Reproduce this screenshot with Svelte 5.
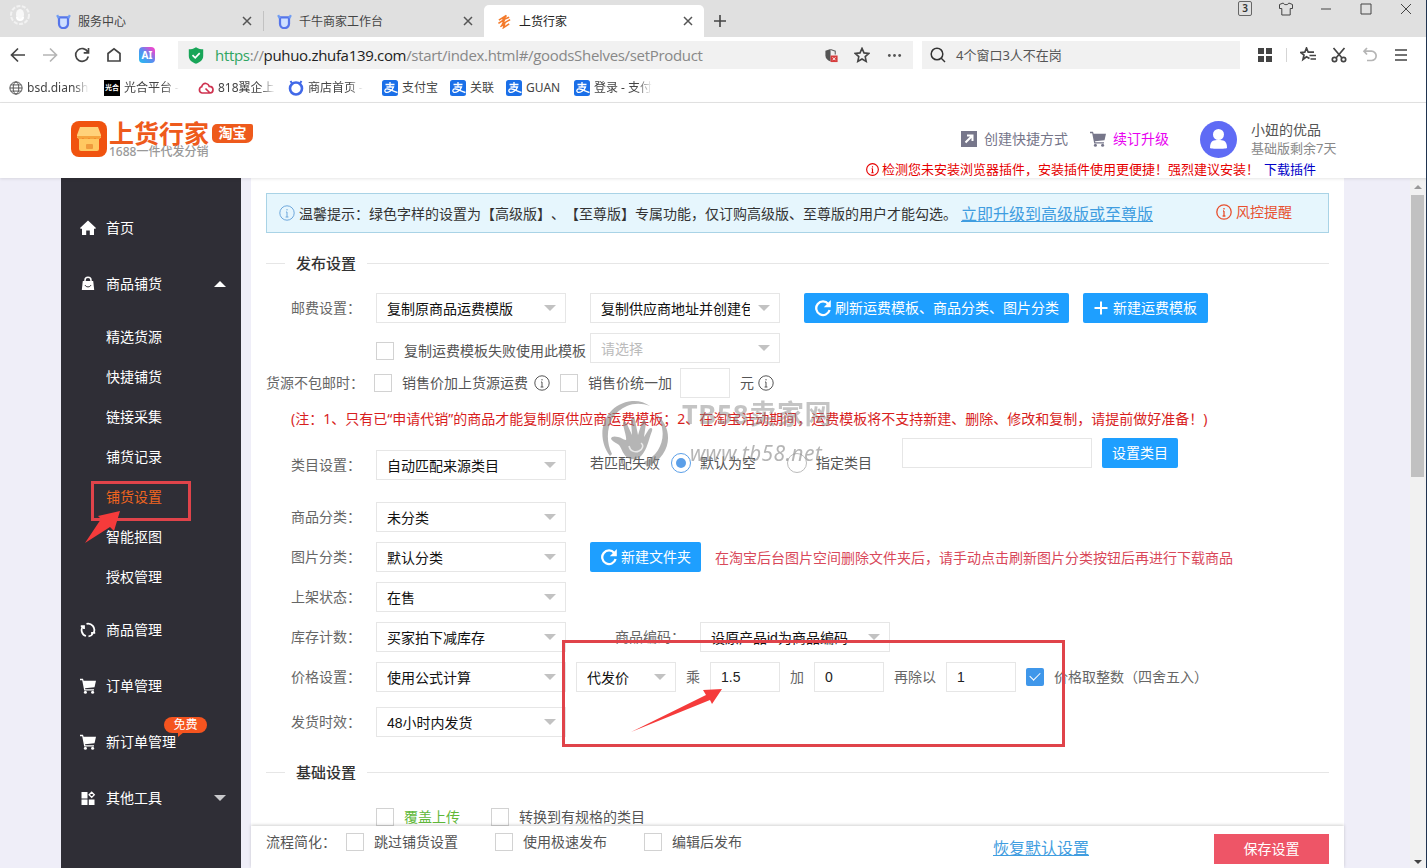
<script lang="ts">
  type Bookmark = { icon: string; text: string; width: number; fade: boolean };

  const bookmarks: Bookmark[] = [
    { icon: 'globe', text: 'bsd.diansh', width: 95, fade: true },
    { icon: 'light', text: '光合平台 -', width: 94, fade: true },
    { icon: 'cloud', text: '818翼企上', width: 90, fade: true },
    { icon: 'ring', text: '商店首页 -', width: 94, fade: true },
    { icon: 'pay', text: '支付宝', width: 68, fade: false },
    { icon: 'pay', text: '关联', width: 56, fade: false },
    { icon: 'pay', text: 'GUAN', width: 68, fade: false },
    { icon: 'pay', text: '登录 - 支付', width: 90, fade: true },
  ];

  const subMenu = ['精选货源', '快捷铺货', '链接采集', '铺货记录', '铺货设置', '智能抠图', '授权管理'];

  let current = '铺货设置';
</script>

{#snippet bull()}
  <svg class="fav" viewBox="0 0 16 16">
    <path d="M3.2 3.5h9.6v6.8a4.8 4.8 0 0 1-9.6 0z" fill="#cfe0ff" stroke="#5675ea" stroke-width="2.4" />
    <path d="M1.200 1.200l1.800 3.300M14.800 1.200l-1.800 3.300" stroke="#6f9cf3" stroke-width="2.400" />
  </svg>
{/snippet}

{#snippet closeX()}
  <svg class="close" viewBox="0 0 10 10"><path d="M1 1l8 8M9 1l-8 8" fill="none" stroke="#555" stroke-width="1.5" /></svg>
{/snippet}

{#snippet select(text: string, size = '', placeholder = false)}
  <div class="select {size}" class:placeholder>
    <span>{text}</span>
    <i></i>
  </div>
{/snippet}

{#snippet check(text: string, extra = '')}
  <label class="check {extra}"><i></i><span>{text}</span></label>
{/snippet}

{#snippet info()}
  <svg class="info" viewBox="0 0 16 16" fill="none" stroke="currentColor">
    <circle cx="8" cy="8" r="7.2" />
    <path d="M8 7v5M7 7h1M6.6 12h2.8M8 4v1.4" />
  </svg>
{/snippet}

{#snippet refresh()}
  <svg class="refresh" viewBox="0 0 18 18">
    <path d="M14.3 4.9A6.8 6.8 0 1 0 15.6 11" fill="none" stroke="#fff" stroke-width="2.3" />
    <path d="M16.8 1v7.2H9.8z" fill="#fff" />
  </svg>
{/snippet}

{#snippet cart()}
  <svg class="ico" viewBox="0 0 16 16" fill="currentColor">
    <path d="M0 .8h3l.6 2H16l-1.500 6.400-9.500 1 .3 1H14v1.400H4.200L2.200 2.200H0z" />
    <circle cx="5.400" cy="14.300" r="1.500" /><circle cx="12.600" cy="14.300" r="1.500" />
  </svg>
{/snippet}

<div class="window">
  <div class="tabs">
    <svg class="badge-logo" viewBox="0 0 22 22">
      <circle cx="11" cy="11" r="9" fill="none" stroke="#f2f2f2" stroke-width="2" stroke-dasharray="4 1.500" />
      <ellipse cx="11" cy="10.500" rx="4" ry="5.500" fill="#f8f8f8" />
      <path d="M8 13c0 4 6 4 6 0" fill="none" stroke="#fff" stroke-width="2" />
    </svg>
    <div class="tab first">{@render bull()}<span>服务中心</span>{@render closeX()}</div>
    <div class="tab">{@render bull()}<span>千牛商家工作台</span>{@render closeX()}</div>
    <div class="tab active">
      <svg class="fav" viewBox="0 0 16 16" fill="none" stroke="#f47b2c" stroke-width="1.700">
        <path d="M2 6.500L10 1.500 6.500 6 13 3.500M1.500 10L8 6 6 10.500 14 6M3.500 13.500L8 11 7 14.500 13 10.500" />
      </svg>
      <span>上货行家</span>{@render closeX()}
    </div>
    <svg class="plus" viewBox="0 0 14 14"><path d="M7 1v12M1 7h12" stroke="#444" stroke-width="1.600" /></svg>
    <div class="win-btns">
      <b>3</b>
      <svg viewBox="0 0 16 16" class="shirt"><path d="M5.200 2L1.500 3.500v4h2.300V14h8.400V7.500h2.300v-4L10.800 2c-.6 2.200-5 2.200-5.600 0z" /></svg>
      <svg viewBox="0 0 16 16"><path d="M3 8h10" /></svg>
      <svg viewBox="0 0 16 16"><path d="M3 3h10v10H3z" /></svg>
      <svg viewBox="0 0 16 16"><path d="M3 3l10 10M13 3L3 13" /></svg>
    </div>
  </div>

  <div class="toolbar">
    <div class="nav">
      <svg viewBox="0 0 16 16"><path d="M15 8H2M8 1.500L1.500 8 8 14.500" /></svg>
      <svg viewBox="0 0 16 16" class="dim"><path d="M1 8h13M8 1.500L14.500 8 8 14.500" /></svg>
      <svg viewBox="0 0 16 16"><path d="M13.800 5A6.400 6.400 0 1 0 14.300 9.500M14.500 1v4.800H9.700" /></svg>
      <svg viewBox="0 0 16 16"><path d="M2 6.500L8 1.800l6 4.700V14H2z" /></svg>
      <div class="ai">AI</div>
    </div>
    <div class="address">
      <svg class="shield" viewBox="0 0 16 17">
        <path d="M8 .3C5.500 2 3 2.300.8 2.300V9c0 4 3.500 6.500 7.200 7.800C11.700 15.500 15.200 13 15.200 9V2.300C13 2.300 10.500 2 8 .3z" fill="#18a558" />
        <path d="M4.500 8.200l2.700 2.600 4.500-4.600" fill="none" stroke="#fff" stroke-width="1.700" />
      </svg>
      <div class="url"><em>https</em><s>://</s><b>puhuo.zhufa139.com</b><s>/start/index.html#/goodsShelves/setProduct</s></div>
      <svg class="guard" viewBox="0 0 16 16">
        <path d="M7 1L1.500 2.800V8c0 3 2 5 5.500 6.500z" fill="#555" />
        <path d="M7 1.600l5 1.700V7" fill="none" stroke="#666" stroke-width="1.200" />
        <path d="M7 8h7.500v7H7z" fill="#d63c3c" /><path d="M9.200 10l3 3M12.200 10l-3 3" stroke="#fff" />
      </svg>
      <svg class="star" viewBox="0 0 16 16"><path d="M8 1.400l2 4.500 4.800.5-3.600 3.200 1 4.800L8 12l-4.200 2.400 1-4.800L1.200 6.400 6 5.900z" /></svg>
      <svg class="more" viewBox="0 0 16 16" fill="#555"><circle cx="2.500" cy="8" r="1.500" /><circle cx="8" cy="8" r="1.500" /><circle cx="13.500" cy="8" r="1.500" /></svg>
    </div>
    <div class="search">
      <svg viewBox="0 0 16 16"><circle cx="7" cy="7" r="5.800" /><path d="M11 11l4 4" /></svg>
      <span>4个窗口3人不在岗</span>
    </div>
    <div class="tools">
      <svg viewBox="0 0 16 16"><path d="M1 1h6v6H1zM9 1h6v6H9zM1 9h6v6H1zM9 9h6v6H9z" fill="#444" stroke="none" /></svg>
      <i></i>
      <svg viewBox="0 0 16 16"><path d="M9.500 11.500L6.500 9.800 3 12.500 4 8 .8 5.500l4-.3L6.500 1l1.700 4.200H14M9.500 8.500H16M10.500 12H16" /></svg>
      <svg viewBox="0 0 16 16"><path d="M2.500 1L11 11M13.500 1L5 11" /><circle cx="3.500" cy="12.500" r="2.200" /><circle cx="12.500" cy="12.500" r="2.200" /></svg>
      <svg viewBox="0 0 16 16" class="dim"><path d="M5 1L2 4.200 5 7.500M2 4.200h7.500a4.600 4.600 0 0 1 0 9.300H5" /></svg>
      <svg viewBox="0 0 16 16"><path d="M2 3h12M2 8h12M2 13h12" /></svg>
    </div>
  </div>

  <div class="bookmarks">
    {#each bookmarks as mark}
      <div class="mark" style="width: {mark.width}px">
        {#if mark.icon === 'globe'}
          <svg class="globe" viewBox="0 0 16 16" fill="none" stroke="#444"><circle cx="8" cy="8" r="7" /><ellipse cx="8" cy="8" rx="3.200" ry="7" /><path d="M1 8h14M2 4.500h12M2 11.500h12" /></svg>
        {:else if mark.icon === 'light'}
          <div class="light">光合</div>
        {:else if mark.icon === 'cloud'}
          <svg viewBox="0 0 16 16" fill="none" stroke="#cf3350" stroke-width="1.700"><path d="M12 13H4a3.200 3.200 0 0 1-.3-6.200C4 4.500 6 3 8.200 3.500c1.500.3 2.600 1.300 3 2.800 2.300 0 3.800 1.500 3.800 3.400 0 1.800-1.200 3.200-3 3.300L7.500 8.500" /></svg>
        {:else if mark.icon === 'ring'}
          <svg viewBox="0 0 16 16"><circle cx="8" cy="8.500" r="6" fill="none" stroke="#4169e8" stroke-width="2.600" /><path d="M2.500 1l2 3M13.500 1l-2 3" stroke="#4169e8" stroke-width="2" /></svg>
        {:else}
          <svg viewBox="0 0 16 16"><rect width="16" height="16" rx="2.500" fill="#1a6fe8" /><path d="M3.500 4.500h9M8 2v5M4.500 7h7C10.500 10.500 6 13 4 12.300c-2.300-1-1-4 2-3.300 3 .6 5 2.500 9.500 3.500" fill="none" stroke="#fff" stroke-width="1.300" /></svg>
        {/if}
        <span class:fade={mark.fade}>{mark.text}</span>
      </div>
    {/each}
  </div>

  <header>
    <div class="logo">
      <svg viewBox="0 0 36 36">
        <rect width="36" height="36" rx="8" fill="#f0530f" />
        <path d="M9 6h18l3 8v3H6v-3z" fill="#ffd27a" />
        <path d="M6 15h24c0 4-5 5-6 2-1 3-5 3-6 0-1 3-5 3-6 0-1 3-6 2-6-2z" fill="#f5a43d" />
        <path d="M8 18h20v10a2 2 0 0 1-2 2H10a2 2 0 0 1-2-2z" fill="#ffc861" />
        <rect x="15" y="23" width="7" height="5" rx="1" fill="#ef9a3c" />
      </svg>
      <div class="names">
        <strong>上货行家</strong>
        <small>1688一件代发分销</small>
      </div>
      <div class="shop">淘宝</div>
    </div>
    <div class="account">
      <div class="line">
        <svg class="ico short" viewBox="0 0 16 16"><path d="M0 0h16v16H0z" fill="#76768a" /><path d="M6 4.500h5.500V10M11 5L4.500 11.500" fill="none" stroke="#fff" stroke-width="2" /></svg>
        <span class="quick">创建快捷方式</span>
        {@render cart()}
        <span class="renew">续订升级</span>
        <svg class="avatar" viewBox="0 0 37 37">
          <circle cx="18.500" cy="18.500" r="18.500" fill="#5f6bf5" />
          <circle cx="18.500" cy="13.500" r="5.500" fill="#fff" />
          <path d="M10 27c0-8 4-8 8.500-8s8.500 0 8.500 8c0 1-17 1-17 0z" fill="#fff" />
        </svg>
        <div class="user"><span>小妞的优品</span><span>基础版剩余7天</span></div>
      </div>
      <div class="warn">
        {@render info()}
        <span>检测您未安装浏览器插件，安装插件使用更便捷！强烈建议安装！</span>
        <a href="#plugin">下载插件</a>
      </div>
    </div>
  </header>

  <div class="page">
    <aside>
      <div class="item">
        <svg class="ico" viewBox="0 0 16 16" fill="currentColor"><path d="M8 .5l8 7.500-1 1-1-.6V15H9.800v-4.500H6.200V15H2V8.400L1 9 0 8z" /></svg>
        <span>首页</span>
      </div>
      <div class="item">
        <svg class="ico" viewBox="0 0 16 16"><path d="M5 5.500V4.300a3 3 0 0 1 6 0V5.500" fill="none" stroke="#fff" stroke-width="1.500" /><path d="M2.800 5h10.400l1 9H1.800z" fill="#fff" /><path d="M5 9c1 2.500 5 2.500 6 0" fill="none" stroke="#2f2e36" /></svg>
        <span>商品铺货</span>
        <i class="up"></i>
      </div>
      <ul>
        {#each subMenu as name}
          <li class:active={name === current}>{name}</li>
        {/each}
      </ul>
      <div class="item">
        <svg class="ico" viewBox="0 0 16 16" fill="none" stroke="#fff" stroke-width="1.800"><path d="M3.200 3.800A6.300 6.300 0 0 0 6 14M6.500 1.900A6.300 6.300 0 0 1 13.800 10.500M8.500 14.300A6.200 6.200 0 0 0 12.800 12M.8 4.200H4V7M15.200 10.800H12V13" /></svg>
        <span>商品管理</span>
      </div>
      <div class="item">{@render cart()}<span>订单管理</span></div>
      <div class="item">
        {@render cart()}<span>新订单管理</span>
        <div class="free">免费</div>
      </div>
      <div class="item">
        <svg class="ico" viewBox="0 0 16 16" fill="#fff"><path d="M1.500 2H7.500V8.500H1.500zM1.500 9.500H7.500V15H1.500zM8.800 9.500h5.700V15H8.800z" /><path d="M11.700 2.200l2.600 2.600-2.600 2.600-2.600-2.600z" fill="none" stroke="#fff" stroke-width="1.300" /></svg>
        <span>其他工具</span>
        <i class="down"></i>
      </div>
    </aside>

    <main>
      <div class="notice">
        {@render info()}
        <p>温馨提示：绿色字样的设置为【高级版】、【至尊版】专属功能，仅订购高级版、至尊版的用户才能勾选。</p>
        <a href="#upgrade">立即升级到高级版或至尊版</a>
        <div class="risk">{@render info()}风控提醒</div>
      </div>

      <div class="legend"><span>发布设置</span></div>

      <div class="row">
        <div class="label">邮费设置：</div>
        {@render select('复制原商品运费模版')}
        <div class="push">{@render select('复制供应商地址并创建包')}</div>
        <button class="btn push wide">{@render refresh()}刷新运费模板、商品分类、图片分类</button>
        <button class="btn tpl"><svg class="add" viewBox="0 0 14 14"><path d="M7 .5v13M.5 7h13" stroke="#fff" stroke-width="2" /></svg>新建运费模板</button>
      </div>
      <div class="row">
        <div class="label"></div>
        {@render check('复制运费模板失败使用此模板', 'low')}
        <div class="near">{@render select('请选择', '', true)}</div>
      </div>
      <div class="row tight">
        <div class="label long">货源不包邮时：</div>
        {@render check('销售价加上货源运费')}
        <div class="tip">{@render info()}</div>
        {@render check('销售价统一加')}
        <div class="input tiny"></div>
        <span class="unit">元</span>
        {@render info()}
      </div>
      <p class="note">(注：1、只有已“申请代销”的商品才能复制原供应商运费模板；2、在淘宝活动期间，运费模板将不支持新建、删除、修改和复制，请提前做好准备！)</p>
      <div class="row category">
        <div class="label">类目设置：</div>
        {@render select('自动匹配来源类目')}
        <span class="push text">若匹配失败</span>
        <label class="radio on"><i></i><span>默认为空</span></label>
        <label class="radio"><i></i><span>指定类目</span></label>
        <div class="input full"></div>
        <button class="btn set">设置类目</button>
      </div>
      <div class="row far">
        <div class="label">商品分类：</div>
        {@render select('未分类')}
      </div>
      <div class="row">
        <div class="label">图片分类：</div>
        {@render select('默认分类')}
        <button class="btn push folder">{@render refresh()}新建文件夹</button>
        <span class="hint">在淘宝后台图片空间删除文件夹后，请手动点击刷新图片分类按钮后再进行下载商品</span>
      </div>
      <div class="row">
        <div class="label">上架状态：</div>
        {@render select('在售')}
      </div>
      <div class="row">
        <div class="label">库存计数：</div>
        {@render select('买家拍下减库存')}
        <div class="label code">商品编码：</div>
        {@render select('设原产品id为商品编码')}
      </div>
      <div class="row">
        <div class="label">价格设置：</div>
        {@render select('使用公式计算')}
        <div class="formula">
          {@render select('代发价', 'small')}
          <span>乘</span>
          <div class="input">1.5</div>
          <span>加</span>
          <div class="input">0</div>
          <span>再除以</span>
          <div class="input">1</div>
          {@render check('价格取整数（四舍五入）', 'checked')}
        </div>
      </div>
      <div class="row delivery">
        <div class="label">发货时效：</div>
        {@render select('48小时内发货')}
      </div>

      <div class="legend base"><span>基础设置</span></div>
      <div class="row options">
        <div class="label"></div>
        {@render check('覆盖上传', 'green')}
        {@render check('转换到有规格的类目')}
      </div>

      <div class="savebar">
        <span>流程简化：</span>
        {@render check('跳过铺货设置')}
        {@render check('使用极速发布')}
        {@render check('编辑后发布')}
        <a href="#reset">恢复默认设置</a>
        <button>保存设置</button>
      </div>
    </main>

    <div class="scroll"><i class="arrow-up"></i><div class="thumb"></div><i class="arrow-down"></i></div>
  </div>

  <!-- site watermark -->
  <div class="watermark">
    <svg viewBox="0 0 72 72" fill="#858585">
      <path d="M12 57C-4 36 6 5 34 2c7-.5 13 1.500 18 5C44 4 36 4 29 7 11 14 5 37 14 55z" />
      <path d="M57 14c19 14 18 42-8 54l-3-5c19-8 25-32 11-49z" />
      <path d="M30 59c-5-3-6-9-9-13-2-2-6-3-8-6 0-3 4-3 7-2 3 0 5 3 8 3 1-2-2-10-3-16 0-3 3-3 4 0l5 11-1-15c0-3 4-3 4 0l3 15 4-13c1-3 4-2 4 1l-2 14 5-8c2-2 4-1 3 2-3 7-4 15-8 21-4 7-10 9-16 6z" />
      <path d="M31 47c1 5 6 7 10 5s5-6 2-8" fill="none" stroke="#ddd" stroke-width="1.500" />
    </svg>
    <div><b>TB58卖家网</b><em>www.tb58.net</em></div>
  </div>

  <!-- tutorial marks -->
  <div class="frame menu-frame"></div>
  <div class="frame price-frame"></div>
  <svg class="arrow menu-arrow" viewBox="0 0 36 34"><path d="M0 33L16 9 13 6 35 1 29 21 25 17z" fill="#f53b3b" /></svg>
  <svg class="arrow price-arrow" viewBox="0 0 92 46"><path d="M0 45L75 8 72 3 91 2 81 17 79 13z" fill="#f53b3b" /></svg>
  <div class="edge"></div>
</div>

<style>
  :global(body) {
    overflow: hidden;
  }

  .window {
    width: 1427px;
    height: 868px;
    position: relative;
    display: flex;
    flex-direction: column;
    overflow: hidden;
    background: #fff;
    color: #555;
    font: 14px/20px 'Noto Sans', 'Noto Sans CJK SC', sans-serif;
    text-spacing-trim: space-all;
    white-space: nowrap;
  }

  .window * {
    box-sizing: border-box;
  }

  svg {
    display: block;
    flex: none;
  }

  p {
    margin: 0;
  }

  a {
    color: #3f9de0;
  }

  /* browser */
  .tabs {
    height: 37px;
    flex: none;
    display: flex;
    background: #e0e0e0;
    font-size: 12px;
    color: #444;
  }

  .badge-logo {
    width: 22px;
    height: 22px;
    margin: 4px 0 0 9px;
  }

  .tab {
    width: 220px;
    display: flex;
    align-items: center;
    margin-top: 5px;
    padding: 0 11px 0 13px;
  }

  .tab span {
    padding-top: 1px;
  }

  .tab.first {
    width: 233px;
    padding-left: 25px;
    border-right: 1px solid #c2c2c2;
    height: 20px;
    margin-top: 11px;
  }

  .tab.active {
    background: #fff;
    border-radius: 5px 5px 0 0;
    color: #222;
  }

  .fav {
    width: 15px;
    height: 15px;
    margin-right: 7px;
  }

  .close {
    width: 10px;
    height: 10px;
    margin-left: auto;
  }

  .plus {
    width: 14px;
    height: 14px;
    margin: 14px 0 0 9px;
  }

  .win-btns {
    margin-left: auto;
    display: flex;
    gap: 24px;
    padding: 1px 13px 0 0;
  }

  .win-btns b {
    width: 14px;
    height: 15px;
    margin-right: 2px;
    border: 1px solid #666;
    border-radius: 2px;
    font: 600 10px/13px 'Noto Sans', sans-serif;
    text-align: center;
    color: #333;
  }

  .win-btns svg {
    width: 16px;
    height: 16px;
    fill: none;
    stroke: #444;
  }

  .toolbar {
    height: 36px;
    flex: none;
    display: flex;
    align-items: center;
  }

  .nav {
    display: flex;
    gap: 16px;
    padding-left: 10px;
    width: 178px;
  }

  .nav svg,
  .tools svg {
    width: 16px;
    height: 16px;
    fill: none;
    stroke: #444;
    stroke-width: 1.7;
  }

  svg.dim {
    stroke: #b5b5b5 !important;
  }

  .ai {
    width: 16px;
    height: 16px;
    margin-left: 1px;
    border-radius: 4px;
    background: linear-gradient(225deg, #e34bd0 15%, #5a8cf0 50%, #22bdf0);
    color: #fff;
    font: 700 10px/16px 'Noto Sans', sans-serif;
    text-align: center;
  }

  .address {
    width: 735px;
    height: 28px;
    display: flex;
    align-items: center;
    background: #f1f1f1;
    padding-left: 10px;
  }

  .shield {
    width: 16px;
    height: 17px;
    margin-right: 11px;
  }

  .url {
    width: 609px;
    flex: none;
    font: 15px/28px 'Open Sans', sans-serif;
    letter-spacing: -0.32px;
  }

  .url em {
    font-style: normal;
    color: #2fa562;
  }

  .url s {
    text-decoration: none;
    color: #888;
  }

  .url b {
    font-weight: 400;
    color: #222;
  }

  .guard,
  .more {
    width: 15px;
    height: 15px;
  }

  .star {
    width: 16px;
    height: 16px;
    margin: 0 17px 0 15px;
    fill: none;
    stroke: #444;
    stroke-width: 1.6;
  }

  .search {
    width: 318px;
    height: 28px;
    margin-left: 9px;
    display: flex;
    align-items: center;
    gap: 10px;
    padding-left: 8px;
    background: #f1f1f1;
    font-size: 13px;
  }

  .search svg {
    width: 16px;
    height: 16px;
    fill: none;
    stroke: #333;
    stroke-width: 1.5;
  }

  .tools {
    display: flex;
    gap: 15px;
    margin-left: 17px;
  }

  .tools i {
    width: 1px;
    height: 14px;
    margin: 1px 0 0 -2px;
    background: #d5d5d5;
  }

  .tools i + svg {
    margin-left: -2px;
  }

  .bookmarks {
    height: 30px;
    flex: none;
    display: flex;
    align-items: center;
    padding-left: 9px;
    border-bottom: 1px solid #e4e4e4;
    font-size: 12px;
    color: #444;
  }

  .mark {
    display: flex;
    align-items: center;
    gap: 4px;
    flex: none;
    padding-right: 10px;
  }

  .mark svg {
    width: 16px;
    height: 16px;
  }

  .mark .globe {
    width: 14px;
  }

  .mark .fade {
    -webkit-mask-image: linear-gradient(90deg, #000 75%, transparent);
    mask-image: linear-gradient(90deg, #000 75%, transparent);
  }

  .light {
    width: 16px;
    height: 16px;
    flex: none;
    background: #000;
    color: #fff;
    font-size: 7px;
    font-weight: 700;
    line-height: 15px;
    text-align: center;
  }

  /* site header */
  header {
    height: 75px;
    flex: none;
    display: flex;
    justify-content: space-between;
    padding: 16px 91px 0 71px;
    position: relative;
    background: #fff;
    box-shadow: 0 1px 3px rgba(0, 0, 0, 0.1);
    z-index: 1;
  }

  .logo {
    display: flex;
    padding-top: 2px;
  }

  .logo svg {
    width: 36px;
    height: 36px;
    margin-right: 2px;
  }

  .names {
    display: flex;
    flex-direction: column;
  }

  .names strong {
    font-size: 25px;
    line-height: 25px;
    color: #ee5a1c;
  }

  .names small {
    margin-top: -1px;
    font-size: 12px;
    font-weight: 500;
    line-height: 13px;
    color: #999;
  }

  .shop {
    width: 41px;
    height: 19px;
    margin: 3px 0 0 3px;
    border-radius: 5px 2px 7px 5px;
    background: #ee5a1c;
    color: #fff;
    font-size: 14px;
    font-weight: 600;
    line-height: 18px;
    text-align: center;
  }

  .account {
    width: 470px;
  }

  .line {
    height: 40px;
    display: flex;
    align-items: center;
    padding-left: 95px;
    color: #76768a;
  }

  .ico {
    width: 16px;
    height: 16px;
  }

  .quick {
    margin: 0 22px 0 7px;
  }

  .renew {
    margin: 0 31px 0 7px;
    color: #e800f0;
  }

  .avatar {
    width: 37px;
    height: 37px;
    margin-right: 14px;
  }

  .user {
    display: flex;
    flex-direction: column;
    line-height: 19px;
    color: #555;
  }

  .user span + span {
    font-size: 13px;
    color: #888;
  }

  .warn {
    height: 20px;
    display: flex;
    align-items: center;
    font-size: 13px;
    color: #e60000;
  }

  .warn a {
    margin-left: 5px;
    color: #0000c8;
    text-decoration: none;
  }

  .info {
    width: 16px;
    height: 16px;
  }

  .warn .info {
    width: 13px;
    height: 13px;
    margin-right: 3px;
    stroke-width: 1.4;
  }

  /* page */
  .page {
    flex: 1;
    min-height: 0;
    display: flex;
    padding-left: 61px;
    background: #efeef8;
  }

  aside {
    width: 180px;
    margin-right: 10px;
    padding-top: 22px;
    background: #2f2e36;
    color: #fff;
  }

  .item {
    height: 56px;
    display: flex;
    align-items: center;
    gap: 10px;
    padding: 0 15px 0 19px;
    position: relative;
  }

  .up,
  .down {
    margin-left: auto;
    border: 6px solid transparent;
    border-top: 0;
    border-bottom-color: #fff;
  }

  .down {
    border-top: 6px solid #c9c9cc;
    border-bottom: 0;
  }

  .free {
    position: absolute;
    left: 103px;
    top: 3px;
    width: 43px;
    height: 16px;
    border-radius: 8px;
    background: #f5541f;
    font-size: 12px;
    line-height: 15px;
    text-align: center;
  }

  .free::after {
    content: '';
    position: absolute;
    left: 14px;
    top: 15px;
    border-top: 5px solid #f5541f;
    border-right: 6px solid transparent;
  }

  ul {
    margin: 0;
    padding: 5px 0;
    list-style: none;
  }

  li {
    height: 40px;
    padding-left: 45px;
    line-height: 40px;
  }

  li.active {
    color: #f0651f;
  }

  main {
    width: 1093px;
    display: flex;
    flex-direction: column;
    padding: 15px 15px 0;
    position: relative;
    background: #fff;
  }

  .notice {
    height: 40px;
    flex: none;
    display: flex;
    align-items: center;
    padding-left: 12px;
    border: 1px solid #a9d3e6;
    background: #e6f6fd;
    color: #333;
  }

  .notice p,
  .notice a {
    padding-top: 2px;
  }

  .notice .info {
    margin-right: 4px;
    color: #6fa8dc;
  }

  .notice a {
    margin-left: 4px;
    font-size: 16px;
  }

  .notice .risk {
    display: flex;
    align-items: center;
    margin-left: 63px;
    padding-bottom: 2px;
    color: #e8502f;
  }

  .risk .info {
    color: #e8502f;
    stroke-width: 1.3;
  }

  .legend {
    height: 20px;
    flex: none;
    margin: 20px 0 0;
    display: flex;
    align-items: center;
    gap: 11px;
    font-size: 15px;
    font-weight: 500;
    color: #333;
  }

  .legend::before,
  .legend::after {
    content: '';
    width: 19px;
    height: 1px;
    background: #e6e6e6;
  }

  .legend::after {
    flex: 1;
  }

  .legend + .row {
    margin-top: 20px;
  }

  .legend.base {
    margin-top: 25px;
  }

  .row {
    height: 30px;
    flex: none;
    margin-top: 10px;
    display: flex;
    align-items: center;
  }

  .row.tight {
    margin-top: 5px;
  }

  .row.far {
    margin-top: 22px;
  }

  .row.delivery {
    margin-top: 15px;
  }

  .label {
    width: 110px;
    flex: none;
    padding-right: 15px;
    text-align: right;
    color: #666;
  }

  .label.long {
    width: 108px;
    padding-right: 10px;
  }

  .label.code {
    width: 134px;
  }

  .select {
    width: 190px;
    height: 30px;
    flex: none;
    display: flex;
    align-items: center;
    justify-content: space-between;
    padding: 0 9px 0 10px;
    border: 1px solid #e6e6e6;
    color: #111;
    font-family: 'Liberation Sans', 'Noto Sans CJK SC', sans-serif;
  }

  .select.small {
    width: 100px;
  }

  .select span {
    max-width: 149px;
    overflow: hidden;
    padding-top: 1px;
  }

  .select i {
    border: 6px solid transparent;
    border-top-color: #c2c2c2;
    border-bottom: 0;
  }

  .select.placeholder {
    color: #bbb;
  }

  .push {
    margin-left: 24px;
  }

  .near {
    margin-left: 4px;
  }

  .btn {
    height: 30px;
    flex: none;
    display: flex;
    align-items: center;
    justify-content: center;
    padding: 0;
    border: 0;
    border-radius: 2px;
    background: #1e9fff;
    color: #fff;
    font: inherit;
  }

  .wide {
    width: 265px;
  }

  .tpl {
    width: 125px;
    margin-left: 14px;
  }

  .folder {
    width: 111px;
  }

  .set {
    width: 76px;
    margin-left: 10px;
  }

  .refresh {
    width: 18px;
    height: 18px;
    margin-right: 3px;
  }

  .add {
    width: 14px;
    height: 14px;
    margin-right: 5px;
  }

  .check {
    display: flex;
    align-items: center;
    gap: 10px;
    flex: none;
  }

  .check.low {
    padding-top: 6px;
  }

  .check i {
    width: 18px;
    height: 18px;
    border: 1px solid #d2d2d2;
    background: #fff;
  }

  .check.green span {
    color: #5fb83a;
  }

  .check.checked i {
    border: 0;
    border-radius: 2px;
    background: #3f97ea;
    display: flex;
    justify-content: center;
    padding-top: 4px;
  }

  .check.checked i::before {
    content: '';
    width: 9px;
    height: 5px;
    border: solid #fff;
    border-width: 0 0 1.5px 1.5px;
    transform: rotate(-45deg);
  }

  .tip {
    margin: 0 10px 0 6px;
  }

  .input {
    width: 70px;
    height: 30px;
    padding-left: 10px;
    border: 1px solid #e6e6e6;
    font: 14px/29px 'Liberation Sans', sans-serif;
    color: #222;
  }

  .input.tiny {
    width: 50px;
    margin-left: 8px;
  }

  .input.full {
    width: 190px;
    margin-left: 30px;
    align-self: flex-start;
  }

  .unit {
    margin: 0 4px 0 10px;
  }

  .note {
    height: 40px;
    flex: none;
    padding: 1px 0 0 25px;
    line-height: 40px;
    color: #d81e1e;
  }

  .row.category {
    height: 42px;
    margin-top: 0;
    padding-top: 12px;
  }

  .category .input,
  .category .btn {
    margin-top: -12px;
    align-self: flex-start;
  }

  .category .text,
  .radio {
    padding-bottom: 4px;
  }

  .radio {
    display: flex;
    align-items: center;
    gap: 9px;
    margin-left: 11px;
  }

  .radio + .radio {
    margin-left: 31px;
  }

  .radio i {
    width: 20px;
    height: 20px;
    border: 1px solid #bbb;
    border-radius: 50%;
    padding: 4px;
  }

  .radio.on i {
    border-color: #5b9fe8;
    background: #5b9fe8 content-box;
  }

  .hint {
    margin-left: 14px;
    padding-top: 2px;
    color: #d9485a;
  }

  .formula {
    display: flex;
    align-items: center;
    gap: 10px;
    margin-left: 10px;
    color: #666;
  }

  .row.options {
    height: 18px;
    margin-top: 26px;
  }

  .options .check + .check {
    margin-left: 31px;
  }

  .savebar {
    position: absolute;
    left: 0;
    right: 0;
    bottom: 0;
    height: 42px;
    display: flex;
    align-items: center;
    padding: 0 15px 10px;
    background: #fff;
    box-shadow: 0 -1px 3px rgba(0, 0, 0, 0.18);
  }

  .savebar .check {
    margin-left: 37px;
  }

  .savebar span + .check {
    margin-left: 10px;
  }

  .savebar a {
    margin: 12px 125px 0 auto;
    font-size: 16px;
  }

  .savebar button {
    width: 115px;
    height: 30px;
    margin-top: 13px;
    border: 0;
    padding: 0;
    background: #ee5567;
    color: #fff;
    font: inherit;
  }

  .scroll {
    width: 16px;
    margin-left: auto;
    margin-right: 1px;
    display: flex;
    flex-direction: column;
    align-items: center;
    padding: 7px 1px 4px 0;
    background: #f1f1f1;
  }

  .arrow-up {
    border: 4px solid transparent;
    border-top: 0;
    border-bottom-color: #999;
  }

  .arrow-down {
    margin-top: auto;
    border: 4px solid transparent;
    border-bottom: 0;
    border-top-color: #444;
  }

  .thumb {
    width: 13px;
    height: 282px;
    margin-top: 6px;
    background: #c1c1c1;
  }

  /* overlays */
  .watermark {
    position: absolute;
    left: 598px;
    top: 399px;
    z-index: 2;
    display: flex;
    opacity: 0.6;
    color: #858585;
  }

  .watermark svg {
    width: 72px;
    height: 72px;
    margin-right: 12px;
  }

  .watermark div {
    display: flex;
    flex-direction: column;
  }

  .watermark b {
    padding-top: 1px;
    font-size: 27px;
    line-height: 28px;
    letter-spacing: 0.7px;
    opacity: 0.8;
  }

  .watermark em {
    margin: 11px 0 0 8px;
    font-size: 21px;
    line-height: 28px;
    letter-spacing: 0.4px;
  }

  .frame {
    position: absolute;
    z-index: 3;
    border: 3px solid #e0434a;
  }

  .menu-frame {
    left: 91px;
    top: 481px;
    width: 100px;
    height: 40px;
  }

  .price-frame {
    left: 562px;
    top: 640px;
    width: 503px;
    height: 107px;
  }

  .arrow {
    position: absolute;
    z-index: 3;
  }

  .menu-arrow {
    left: 85px;
    top: 510px;
    width: 36px;
    height: 34px;
  }

  .price-arrow {
    left: 631px;
    top: 687px;
    width: 92px;
    height: 46px;
  }

  .edge {
    position: absolute;
    right: 0;
    top: 0;
    width: 1px;
    height: 100%;
    z-index: 4;
    background: #1f3450;
  }
</style>
